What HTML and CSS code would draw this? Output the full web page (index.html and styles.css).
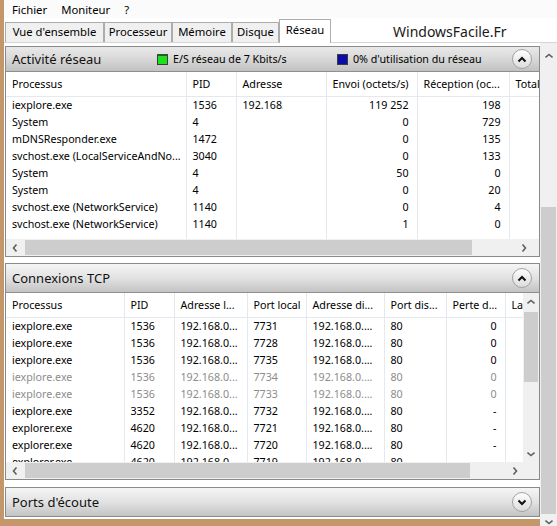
FILE: index.html
```html
<!DOCTYPE html>
<html lang="fr">
<head>
<meta charset="utf-8">
<title>Moniteur de ressources - Réseau</title>
<link rel="stylesheet" href="styles.css">
</head>
<body>
<div class="app">
  <div class="menubar">
    <span>Fichier</span><span>Moniteur</span><span>?</span>
  </div>
  <div class="tabbar">
    <div class="tab t1">Vue d'ensemble</div>
    <div class="tab t2">Processeur</div>
    <div class="tab t3">Mémoire</div>
    <div class="tab t4">Disque</div>
    <div class="tab t5 active">Réseau</div>
    <div class="brand">WindowsFacile.Fr</div>
  </div>
  <div class="workspace">
    <div class="content">
      <section class="panel p1">
        <div class="phead short">
          <div class="ptitle w1">Activité réseau</div>
          <div class="legend w2"><span class="sq green"></span>E/S réseau de 7 Kbits/s</div>
          <div class="legend grow"><span class="sq blue"></span>0% d'utilisation du réseau</div>
          <div class="cbtn"><svg width="10" height="7" viewBox="0 0 10 7"><polyline points="1.5,5.5 5,2 8.5,5.5" fill="none" stroke="#111" stroke-width="2"/></svg></div>
        </div>
        <div class="tblwrap tw1">
          <table class="grid g1">
            <colgroup><col class="c180"><col class="c50"><col class="c90"><col class="c91"><col class="c92"><col class="c60"></colgroup>
            <thead><tr><th>Processus</th><th>PID</th><th>Adresse</th><th class="num">Envoi (octets/s)</th><th>Réception (oc...</th><th>Total</th></tr></thead>
            <tbody>
              <tr><td>iexplore.exe</td><td>1536</td><td><span class="cut">192.168.0.10</span></td><td class="num">119 252</td><td class="num">198</td><td></td></tr>
              <tr><td>System</td><td>4</td><td></td><td class="num">0</td><td class="num">729</td><td></td></tr>
              <tr><td>mDNSResponder.exe</td><td>1472</td><td></td><td class="num">0</td><td class="num">135</td><td></td></tr>
              <tr><td>svchost.exe (LocalServiceAndNo...</td><td>3040</td><td></td><td class="num">0</td><td class="num">133</td><td></td></tr>
              <tr><td>System</td><td>4</td><td></td><td class="num">50</td><td class="num">0</td><td></td></tr>
              <tr><td>System</td><td>4</td><td></td><td class="num">0</td><td class="num">20</td><td></td></tr>
              <tr><td>svchost.exe (NetworkService)</td><td>1140</td><td></td><td class="num">0</td><td class="num">4</td><td></td></tr>
              <tr><td>svchost.exe (NetworkService)</td><td>1140</td><td></td><td class="num">1</td><td class="num">0</td><td></td></tr>
              <tr class="filler"><td></td><td></td><td></td><td></td><td></td><td></td></tr>
            </tbody>
          </table>
        </div>
        <div class="hscroll">
          <div class="sbtn"><svg width="6" height="8" viewBox="0 0 6 8"><polyline points="4.5,0.5 1.5,4 4.5,7.5" fill="none" stroke="#606060" stroke-width="1.6"/></svg></div>
          <div class="htrack"><div class="hthumb th1"></div></div>
          <div class="sbtn"><svg width="6" height="8" viewBox="0 0 6 8"><polyline points="1.5,0.5 4.5,4 1.5,7.5" fill="none" stroke="#606060" stroke-width="1.6"/></svg></div>
          <div class="corner"></div>
        </div>
      </section>

      <section class="panel p2">
        <div class="phead">
          <div class="ptitle grow">Connexions TCP</div>
          <div class="cbtn"><svg width="10" height="7" viewBox="0 0 10 7"><polyline points="1.5,5.5 5,2 8.5,5.5" fill="none" stroke="#111" stroke-width="2"/></svg></div>
        </div>
        <div class="tblrow">
          <div class="tblwrap tw2">
            <table class="grid g2">
              <colgroup><col class="c118"><col class="c50"><col class="c73"><col class="c59"><col class="c78"><col class="c62"><col class="c59"><col class="c60"></colgroup>
              <thead><tr><th>Processus</th><th>PID</th><th>Adresse l...</th><th>Port local</th><th>Adresse di...</th><th>Port dis...</th><th class="num">Perte d...</th><th>Latence</th></tr></thead>
              <tbody>
                <tr><td>iexplore.exe</td><td>1536</td><td>192.168.0...</td><td>7731</td><td>192.168.0....</td><td>80</td><td class="num">0</td><td></td></tr>
                <tr><td>iexplore.exe</td><td>1536</td><td>192.168.0...</td><td>7728</td><td>192.168.0....</td><td>80</td><td class="num">0</td><td></td></tr>
                <tr><td>iexplore.exe</td><td>1536</td><td>192.168.0...</td><td>7735</td><td>192.168.0....</td><td>80</td><td class="num">0</td><td></td></tr>
                <tr class="dim"><td>iexplore.exe</td><td>1536</td><td>192.168.0...</td><td>7734</td><td>192.168.0....</td><td>80</td><td class="num">0</td><td></td></tr>
                <tr class="dim"><td>iexplore.exe</td><td>1536</td><td>192.168.0...</td><td>7733</td><td>192.168.0....</td><td>80</td><td class="num">0</td><td></td></tr>
                <tr><td>iexplore.exe</td><td>3352</td><td>192.168.0...</td><td>7732</td><td>192.168.0....</td><td>80</td><td class="num">-</td><td></td></tr>
                <tr><td>explorer.exe</td><td>4620</td><td>192.168.0...</td><td>7721</td><td>192.168.0....</td><td>80</td><td class="num">-</td><td></td></tr>
                <tr><td>explorer.exe</td><td>4620</td><td>192.168.0...</td><td>7720</td><td>192.168.0....</td><td>80</td><td class="num">-</td><td></td></tr>
                <tr><td>explorer.exe</td><td>4620</td><td>192.168.0...</td><td>7719</td><td>192.168.0....</td><td>80</td><td class="num">-</td><td></td></tr>
              </tbody>
            </table>
          </div>
          <div class="vscroll">
            <div class="vbtn"><svg width="8" height="6" viewBox="0 0 8 6"><polyline points="0.5,4.5 4,1.5 7.5,4.5" fill="none" stroke="#606060" stroke-width="1.6"/></svg></div>
            <div class="vtrack"><div class="vthumb"></div></div>
            <div class="vbtn"><svg width="8" height="6" viewBox="0 0 8 6"><polyline points="0.5,1.5 4,4.5 7.5,1.5" fill="none" stroke="#606060" stroke-width="1.6"/></svg></div>
          </div>
        </div>
        <div class="hscroll">
          <div class="sbtn"><svg width="6" height="8" viewBox="0 0 6 8"><polyline points="4.5,0.5 1.5,4 4.5,7.5" fill="none" stroke="#606060" stroke-width="1.6"/></svg></div>
          <div class="htrack"><div class="hthumb th2"></div></div>
          <div class="sbtn"><svg width="6" height="8" viewBox="0 0 6 8"><polyline points="1.5,0.5 4.5,4 1.5,7.5" fill="none" stroke="#606060" stroke-width="1.6"/></svg></div>
          <div class="corner2"></div>
        </div>
      </section>

      <section class="panel p3">
        <div class="phead low">
          <div class="ptitle grow">Ports d'écoute</div>
          <div class="cbtn"><svg width="10" height="7" viewBox="0 0 10 7"><polyline points="1.5,1.5 5,5 8.5,1.5" fill="none" stroke="#111" stroke-width="2"/></svg></div>
        </div>
      </section>
    </div>
    <div class="oscroll">
      <div class="obtn top"><svg width="8" height="6" viewBox="0 0 8 6"><polyline points="0.5,4.5 4,1.5 7.5,4.5" fill="none" stroke="#606060" stroke-width="1.6"/></svg></div>
      <div class="otrack"><div class="othumb"></div></div>
      <div class="obtn bottom"><svg width="8" height="6" viewBox="0 0 8 6"><polyline points="0.5,1.5 4,4.5 7.5,1.5" fill="none" stroke="#606060" stroke-width="1.6"/></svg></div>
    </div>
  </div>
</div>
</body>
</html>
```

FILE: styles.css
```css
* { box-sizing: border-box; margin: 0; padding: 0; }
html, body { width: 557px; height: 526px; overflow: hidden; }
body {
  background: #c4976b;
  padding-left: 4px;
  font-family: "Segoe UI", "Noto Sans", "Open Sans", sans-serif;
  font-size: 11px;
  color: #000;
}
.app { display: flex; flex-direction: column; height: 526px; }

.menubar {
  height: 18px;
  background: #fbfbfb;
  display: flex;
  align-items: center;
  gap: 14px;
  padding-left: 8px;
  font-size: 11.3px;
}

.tabbar {
  height: 25px;
  background: #fff;
  display: flex;
  align-items: flex-end;
  padding-left: 1px;
  border-bottom: 1px solid #d5d5d5;
}
.tab {
  height: 20px;
  background: #f0f0f0;
  border: 1px solid #acacac;
  border-bottom: none;
  text-align: center;
  font-size: 11.3px;
  line-height: 18px;
}
.t1 { width: 99px; }
.t2 { width: 68px; }
.t3 { width: 60px; }
.t4 { width: 47px; }
.t5 { width: 52px; }
.tab.active {
  height: 24px;
  margin-bottom: -1px;
  background: #fff;
  line-height: 20px;
}
.brand {
  align-self: center;
  margin-left: 62px;
  margin-top: 3px;
  font-size: 14px;
  color: #1a1a1a;
}

.workspace { display: flex; height: 483px; }
.content {
  width: 536px;
  height: 476px;
  background: #fff;
  padding: 3px 0 0 1px;
}
.oscroll {
  width: 17px;
  height: 483px;
  background: #f0f0f0;
  display: flex;
  flex-direction: column;
}
.obtn { display: flex; justify-content: center; }
.obtn.top { height: 26px; align-items: flex-end; padding-bottom: 10px; }
.obtn.bottom { height: 12px; align-items: flex-start; padding-top: 5px; }
.otrack { flex: 1; padding-top: 138px; }
.othumb { height: 307px; margin: 0 1px; background: #cdcdcd; }

.panel {
  width: 535px;
  border: 1px solid #8a8a8a;
  background: #fff;
}
.p2 { margin-top: 6px; }
.p3 { margin-top: 7px; }

.phead {
  height: 29px;
  display: flex;
  align-items: center;
  padding-left: 6px;
  padding-right: 7px;
  background: linear-gradient(to bottom, #f5f5f5 0%, #e2e2e2 50%, #c3c3c3 100%);
  border-bottom: 1px solid #8f8f8f;
}
.phead.short { height: 25px; background: linear-gradient(to bottom, #e9e9e9 0%, #d8d8d8 50%, #c1c1c1 100%); }
.phead.low { height: 28px; border-bottom: none; }
.ptitle { font-size: 13px; color: #111; }
.w1 { width: 145px; }
.w2 { width: 180px; }
.grow { flex: 1; }
.legend { display: flex; align-items: center; font-size: 10.7px; }
.sq {
  width: 11px;
  height: 11px;
  margin-right: 5px;
  border: 1px solid #3c3c3c;
}
.sq.green { background: #1fe01f; border-top: 2px solid #2b5a2b; }
.sq.blue { background: #0c0ca8; }
.cbtn {
  width: 20px;
  height: 20px;
  border-radius: 50%;
  border: 1px solid #a2a2a2;
  background: linear-gradient(to bottom, #fefefe, #dcdcdc);
  display: flex;
  align-items: center;
  justify-content: center;
}

.tblwrap { overflow: hidden; }
.tw1 { height: 167px; }
.tblrow { display: flex; height: 169px; }
.tw2 { width: 517px; height: 169px; }

.grid {
  table-layout: fixed;
  border-collapse: collapse;
  font-size: 10.7px;
}
.g1 { width: 563px; }
.g2 { width: 559px; }
.c180 { width: 180px; } .c50 { width: 50px; } .c90 { width: 90px; } .c91 { width: 91px; }
.c92 { width: 92px; } .c60 { width: 60px; } .c118 { width: 118px; } .c73 { width: 73px; }
.c59 { width: 59px; } .c78 { width: 78px; } .c62 { width: 62px; }
.grid th, .grid td {
  white-space: nowrap;
  overflow: hidden;
  text-overflow: clip;
  padding: 0 6px;
  text-align: left;
  font-weight: normal;
  border-right: 1px solid #e4e9ef;
}
.grid th { height: 24px; border-bottom: 1px solid #e4e9ef; }
.grid td { height: 17px; line-height: 17px; }
.grid .num { text-align: right; padding-right: 8px; }
.grid tr.filler td { height: 7px; }
.grid tr.dim td { color: #8c8c8c; }
.cut { display: inline-block; width: 40px; overflow: hidden; vertical-align: top; }

.vscroll {
  width: 16px;
  background: #f0f0f0;
  display: flex;
  flex-direction: column;
}
.vbtn { height: 17px; display: flex; align-items: center; justify-content: center; }
.vtrack { flex: 1; padding-top: 2px; }
.vthumb { height: 70px; margin: 0 1px; background: #cdcdcd; }

.hscroll { height: 17px; display: flex; background: #f0f0f0; }
.sbtn { width: 17px; display: flex; align-items: center; justify-content: center; }
.htrack { flex: 1; padding: 1px 0; }
.hthumb { height: 15px; background: #cdcdcd; }
.th1 { margin-left: 2px; width: 447px; }
.th2 { margin-left: 2px; width: 445px; }
.corner { width: 7px; }
.corner2 { width: 16px; }
```
